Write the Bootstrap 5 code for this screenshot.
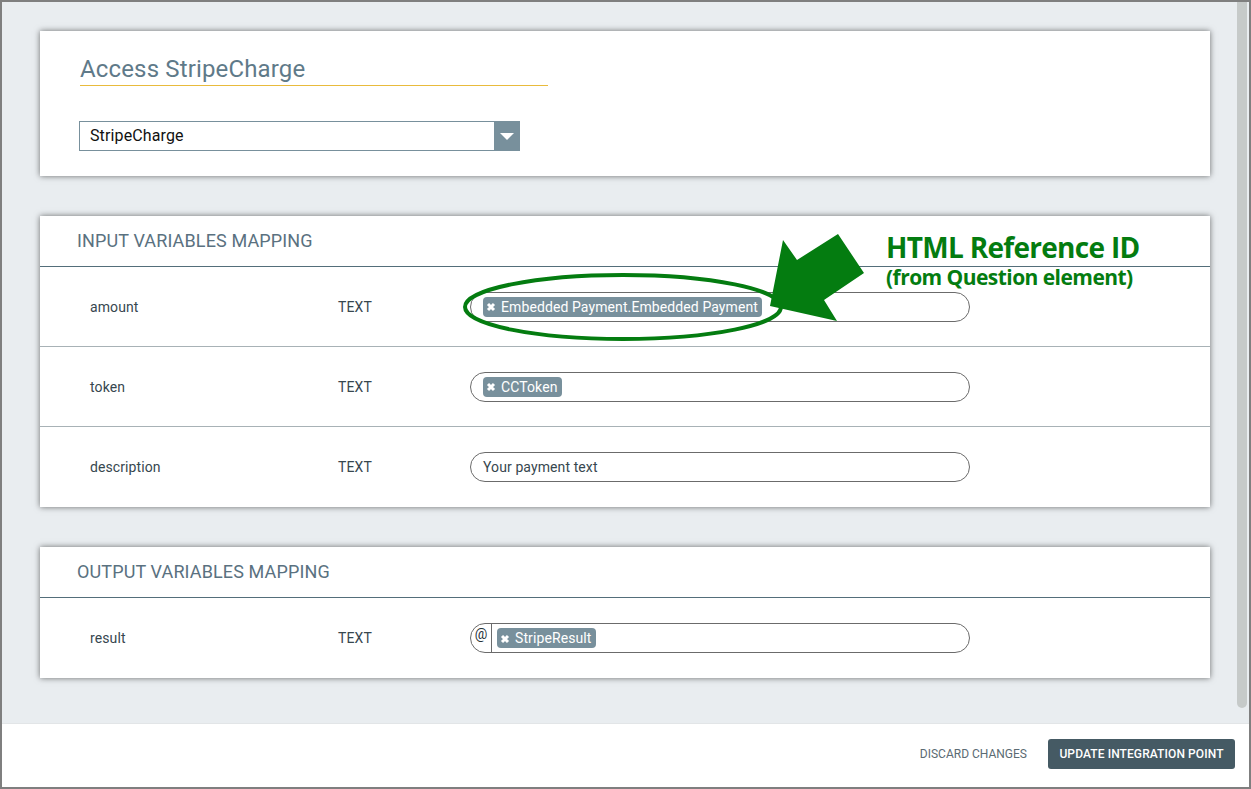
<!DOCTYPE html>
<html lang="en">
<head>
<meta charset="utf-8">
<title>Access StripeCharge</title>
<link rel="stylesheet" href="https://cdn.jsdelivr.net/npm/bootstrap@5.3.0/dist/css/bootstrap.min.css">
<style>
html,body{margin:0;height:789px;overflow:hidden;background:#fff;font-family:Roboto,"Liberation Sans",sans-serif}
.frame{position:relative;width:1251px;height:789px;border:2px solid #7f7f7f;background:#fff}
.work{height:722px;background:#e9edf0;border-bottom:1px solid #e2e5e7}
.pane{width:1235px;padding:29px 27px 0 38px}
.rail{width:10px;height:706px;background:#c6cac9;border-radius:0 0 5px 5px}
.panel{border:0;border-radius:0;box-shadow:0 0 6px rgba(0,0,0,.55);margin-bottom:40px;color:#37474f}
.panel-top{height:145px;padding:21px 40px 0 39px}
.title-line{width:468px;margin:0 0 35px 1px;height:34px;font-size:24px;line-height:34px;font-weight:400;color:#5f7a89;border-bottom:1px solid #e9bb3c;letter-spacing:.15px}
.pick{width:441px;height:30px;border:1px solid #78909c;font-size:16px;color:#111;padding-left:10px;letter-spacing:.12px}
.pick-btn{width:26px;height:30px;margin-right:-1px;background:#78909c}
.tri{width:0;height:0;border-left:7px solid transparent;border-right:7px solid transparent;border-top:7px solid #fff}
.panel-head{height:51px;background:#fff;border-radius:0!important;border-bottom:1px solid #546e7a;padding:0 0 2px 37px;font-size:18px;font-weight:400;letter-spacing:.13px;color:#5a7180}
.map-row{height:80px;padding:0 0 0 50px;font-size:14px;border-color:#a8b2b6;color:#37474f;letter-spacing:.1px}
.map-row:last-child{border-radius:0!important}
.name-cell{width:248px;padding-top:1px}
.type-cell{width:132px;padding-top:1px}
.pill{width:500px;height:30px;border:1px solid #6b6b6b;border-radius:15px;padding-left:12px;color:#37474f;background:#fff;overflow:hidden}
.at-cell{width:21px;height:28px;margin-left:-12px;border-right:1px solid #6b6b6b;font-size:14px;text-align:center;line-height:20px;margin-right:5px;color:#263238}
.chip{height:20px;padding:0 4px 0 2px;border-radius:4px;background:#78909c;color:#fff;font-size:14px;line-height:20px;gap:4px}
.chip svg{display:block;width:12px;height:12px;margin-top:1px}
.foot{height:63px;padding:0 14px 3px 0;gap:21px}
.discard{font-size:12px;color:#5b6b73;padding:0;border:0;font-weight:400}
.update{width:187px;height:30px;padding:0;background:#455a64;color:#fff;border:0;border-radius:3px;font-size:12px;font-weight:500;letter-spacing:.1px}
.overlay{position:absolute;left:-2px;top:-2px;pointer-events:none}
.note{position:absolute;left:884px;top:231px;color:#047c10;font-family:"Open Sans","Noto Sans",sans-serif;font-weight:700;line-height:1}
.note-a{font-size:28px;letter-spacing:-.7px;margin-bottom:6px}
.note-b{font-size:21px;letter-spacing:-.55px}
</style>
</head>
<body>
<div class="frame d-flex flex-column">
  <div class="work d-flex">
    <div class="pane">
      <section class="card panel panel-top">
        <h1 class="title-line">Access StripeCharge</h1>
        <div class="pick d-flex align-items-center justify-content-between">
          <span>StripeCharge</span>
          <span class="pick-btn d-flex align-items-center justify-content-center"><span class="tri"></span></span>
        </div>
      </section>

      <section class="card panel">
        <div class="card-header panel-head d-flex align-items-center">INPUT VARIABLES MAPPING</div>
        <ul class="list-group list-group-flush">
          <li class="list-group-item map-row d-flex align-items-center">
            <span class="name-cell">amount</span><span class="type-cell">TEXT</span>
            <div class="pill d-flex align-items-center">
              <span class="chip d-inline-flex align-items-center"><svg viewBox="0 0 12 12"><path d="M3 3l6 6M9 3l-6 6" stroke="#fff" stroke-width="3" fill="none"/></svg>Embedded Payment.Embedded Payment</span>
            </div>
          </li>
          <li class="list-group-item map-row d-flex align-items-center">
            <span class="name-cell">token</span><span class="type-cell">TEXT</span>
            <div class="pill d-flex align-items-center">
              <span class="chip d-inline-flex align-items-center"><svg viewBox="0 0 12 12"><path d="M3 3l6 6M9 3l-6 6" stroke="#fff" stroke-width="3" fill="none"/></svg>CCToken</span>
            </div>
          </li>
          <li class="list-group-item map-row d-flex align-items-center">
            <span class="name-cell">description</span><span class="type-cell">TEXT</span>
            <div class="pill d-flex align-items-center">Your payment text</div>
          </li>
        </ul>
      </section>

      <section class="card panel">
        <div class="card-header panel-head d-flex align-items-center">OUTPUT VARIABLES MAPPING</div>
        <ul class="list-group list-group-flush">
          <li class="list-group-item map-row d-flex align-items-center">
            <span class="name-cell">result</span><span class="type-cell">TEXT</span>
            <div class="pill d-flex align-items-center">
              <span class="at-cell">@</span>
              <span class="chip d-inline-flex align-items-center"><svg viewBox="0 0 12 12"><path d="M3 3l6 6M9 3l-6 6" stroke="#fff" stroke-width="3" fill="none"/></svg>StripeResult</span>
            </div>
          </li>
        </ul>
      </section>
    </div>
    <div class="rail"></div>
  </div>
  <div class="foot d-flex align-items-center justify-content-end">
    <button type="button" class="btn discard">DISCARD CHANGES</button>
    <button type="button" class="btn update">UPDATE INTEGRATION POINT</button>
  </div>

  <svg class="overlay" width="1251" height="789" viewBox="0 0 1251 789">
    <ellipse cx="623" cy="307" rx="158" ry="32" fill="none" stroke="#047c10" stroke-width="4"/>
    <polygon points="783,240 797,260 838,234 864,273 824,300 837,321 770,306" fill="#047c10"/>
  </svg>
  <div class="note">
    <div class="note-a">HTML Reference ID</div>
    <div class="note-b">(from Question element)</div>
  </div>
</div>
<script src="https://cdn.jsdelivr.net/npm/bootstrap@5.3.0/dist/js/bootstrap.bundle.min.js"></script>
</body>
</html>
